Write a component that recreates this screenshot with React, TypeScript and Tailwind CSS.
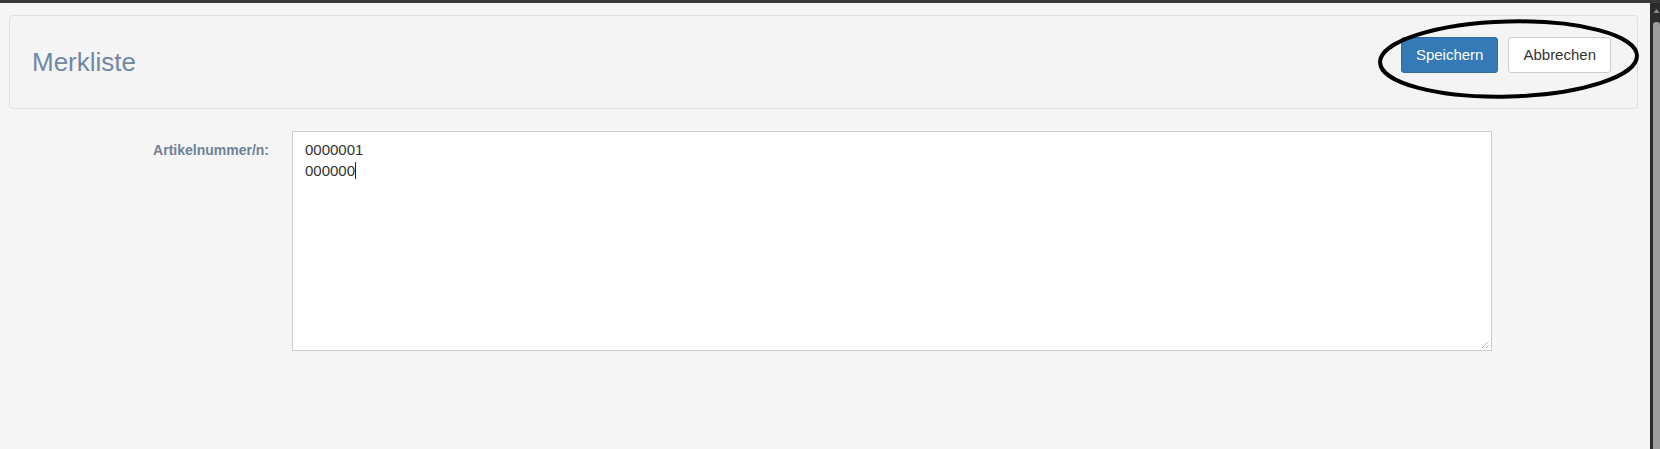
import React from "react";

export default function App() {
  return (
    <div
      className="relative w-[1660px] h-[449px] overflow-hidden bg-[#f5f5f5] flex flex-col"
      style={{ fontFamily: '"Liberation Sans", Arial, sans-serif' }}
    >
      <div className="h-[3px] w-full bg-[#393939] shrink-0" />
      <div className="flex flex-1 min-h-0">
        <main className="flex-1 min-w-0">
          <div className="ml-[9px] mr-[12px] mt-[12px] h-[94px] rounded-[4px] border border-[#e0e0e0] bg-[#f4f4f4] flex justify-between items-start pl-[22px] pr-[26px]">
            <h1 className="self-center text-[26px] leading-none text-[#7088a4] font-normal">
              Merkliste
            </h1>
            <div className="mt-[21px] flex gap-[10px]">
              <button className="h-[36px] px-[14px] rounded-[3px] border border-[#2e6da4] bg-[#337ab7] text-white text-[15px] leading-[20px]">
                Speichern
              </button>
              <button className="h-[36px] px-[14px] rounded-[3px] border border-[#cccccc] bg-white text-[#333333] text-[15px] leading-[20px]">
                Abbrechen
              </button>
            </div>
          </div>
          <div className="mt-[22px] flex items-start">
            <label className="w-[269px] shrink-0 text-right pt-[9px] text-[14px] leading-[20px] font-bold text-[#6f8198]">
              Artikelnummer/n:
            </label>
            <div className="relative ml-[23px] w-[1200px] h-[220px] border border-[#cccccc] bg-white pl-[12px] pt-[7px] text-[15px] leading-[21px] text-[#333333]">
              <div>0000001</div>
              <div className="flex items-center">
                <span>000000</span>
                <span className="inline-block w-[1px] h-[17px] bg-[#222222]" />
              </div>
              <svg
                className="absolute right-[1px] bottom-[1px]"
                width="9"
                height="9"
                viewBox="0 0 9 9"
              >
                <path d="M1 8 L8 1" stroke="#7a7a7a" strokeWidth="1" strokeDasharray="1 1" />
                <path d="M5 8 L8 5" stroke="#7a7a7a" strokeWidth="1" strokeDasharray="1 1" />
              </svg>
            </div>
          </div>
        </main>
        <div className="w-[10px] shrink-0 bg-[#2b2b2b] flex">
          <div className="w-[3px]" />
          <div className="flex-1 flex flex-col items-center">
            <svg width="7" height="8" viewBox="0 0 7 8" className="mt-[5px]">
              <path d="M3.5 1 L6.5 5 L0.5 5 Z" fill="#8a8a8a" />
            </svg>
            <div className="mt-[6px] w-full flex-1 bg-[#9e9e9e] rounded-t-[3px]" />
          </div>
        </div>
      </div>
      <svg
        className="absolute left-0 top-0 pointer-events-none"
        width="1660"
        height="449"
      >
        <ellipse
          cx="1508.5"
          cy="59"
          rx="128.5"
          ry="37.5"
          fill="none"
          stroke="#000"
          strokeWidth="4"
          transform="rotate(-1.5 1508.5 59)"
        />
      </svg>
    </div>
  );
}
